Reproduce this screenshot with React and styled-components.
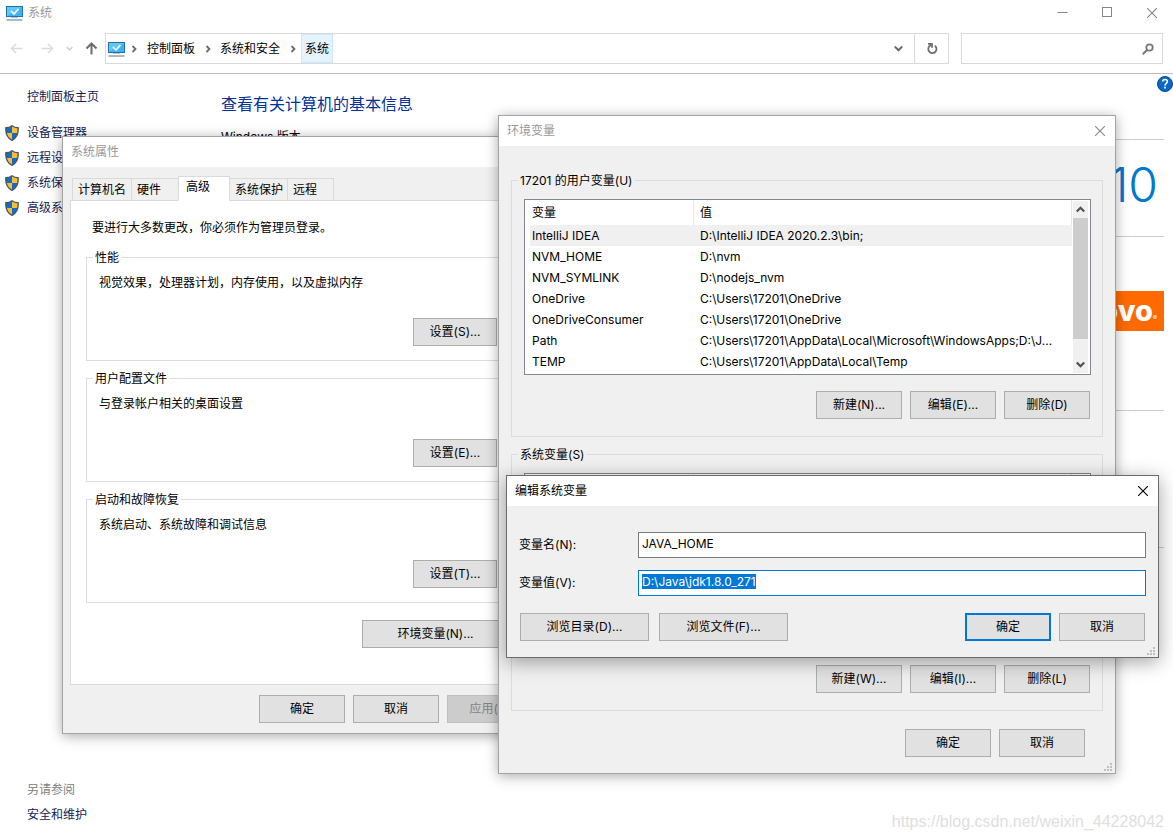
import React, { useEffect, useRef } from "react";
import styled, { createGlobalStyle, css } from "styled-components";

const Global = createGlobalStyle`
  *, *::before, *::after { box-sizing: border-box; }
  body { margin: 0; background: #fff; }
  body, button, input, table {
    font-family: Inter, "Noto Sans CJK SC", sans-serif;
    font-size: 12px;
    line-height: 18px;
    color: #000;
  }
  a { color: inherit; text-decoration: none; }
  svg { display: block; flex: none; }
`;

/* ---------- desktop and main window ---------- */

const Desktop = styled.div`
  position: relative;
  min-height: 100vh;
  overflow: hidden;
  display: flex;
  flex-direction: column;
`;

const WindowBar = styled.header`
  display: flex;
  align-items: center;
  height: 25px;
  padding: 0 16px 0 6px;
  gap: 5px;
  color: #999;
`;

const WindowControls = styled.div`
  display: flex;
  gap: 34px;
  margin-left: auto;
`;

const IconButton = styled.button`
  display: flex;
  align-items: center;
  justify-content: center;
  padding: 0;
  border: 0;
  background: none;
  color: ${(p) => p.$color || "#868686"};
`;

const NavRow = styled.nav`
  display: flex;
  align-items: center;
  padding: 8px 10px 9px;
  border-bottom: 1px solid #bfbfbf;
`;

const NavButtons = styled.div`
  display: flex;
  align-items: center;
  gap: ${(p) => p.$gap}px;
`;

const AddressBar = styled.div`
  flex: 1;
  display: flex;
  height: 31px;
  margin-left: 7px;
  border: 1px solid #d9d9d9;
`;

const Crumbs = styled.div`
  flex: 1;
  display: flex;
  align-items: center;
  padding: 0 11px 0 2px;
`;

const Crumb = styled.a`
  display: flex;
  align-items: center;
  height: 29px;
  padding: 0 3px;
  border: 1px solid ${(p) => (p.$current ? "#cce8ff" : "transparent")};
  background: ${(p) => (p.$current ? "#e5f3ff" : "none")};
`;

const CrumbArrow = styled.span`
  display: flex;
  justify-content: center;
  width: ${(p) => (p.$wide ? 18 : 17)}px;
`;

const DropButton = styled(IconButton)`
  margin-left: auto;
`;

const Refresh = styled(IconButton)`
  width: 34px;
  border-left: 1px solid #d9d9d9;
`;

const SearchBox = styled.label`
  display: flex;
  align-items: center;
  width: 202px;
  height: 31px;
  margin-left: 12px;
  padding-right: 8px;
  border: 1px solid #d9d9d9;
  color: #767676;
`;

const SearchInput = styled.input`
  flex: 1;
  min-width: 0;
  border: 0;
  outline: 0;
  padding: 0 6px;
`;

const Columns = styled.div`
  flex: 1;
  display: flex;
`;

const Sidebar = styled.aside`
  display: flex;
  flex-direction: column;
  width: 221px;
  padding: 14px 0 9px 5px;
  color: #151c55;
`;

const SideLink = styled.a`
  display: flex;
  align-items: center;
  gap: 8px;
  height: 18px;
  margin-bottom: 7px;
  padding-left: ${(p) => (p.$plain ? 22 : 0)}px;
`;

const SideTasks = styled.div`
  margin-top: 11px;
`;

const SeeAlso = styled.div`
  margin-top: auto;
`;

const SeeTitle = styled.div`
  margin-bottom: 7px;
  padding-left: 22px;
  color: #808080;
`;

const Main = styled.main`
  flex: 1;
  padding: 18px 9px 0 0;
`;

const Heading = styled.h1`
  margin: 0;
  font-size: 16px;
  line-height: 24px;
  font-weight: 400;
  color: #003399;
`;

const Section = styled.section`
  display: flex;
  align-items: flex-start;
  justify-content: flex-end;
  height: ${(p) => p.$height}px;
  border-top: 1px solid #ccc;
`;

const Edition = styled.h2`
  margin: 12px 0 0;
  font-size: 12px;
  font-weight: 400;
  line-height: 18px;
  height: 11px;
`;

const Brand = styled.div`
  padding: 10px 6px 0 0;
  font-family: Inter, sans-serif;
  font-size: 48px;
  font-weight: 300;
  line-height: 70px;
  color: #0078cf;
`;

const Maker = styled.div`
  display: flex;
  align-items: center;
  height: 40px;
  padding: 0 7px;
  margin-top: 54px;
  background: #ff6a00;
  color: #fff;
  font-family: Inter, sans-serif;
  font-size: 29px;
  font-weight: 800;
  line-height: 40px;
`;

const Mark = styled.small`
  align-self: flex-end;
  font-size: 6px;
  font-weight: 400;
  line-height: 26px;
`;

const HelpLink = styled.a`
  position: absolute;
  top: 76px;
  right: 0;
`;

const Watermark = styled.div`
  position: absolute;
  right: 9px;
  bottom: 8px;
  font-family: "Liberation Sans", sans-serif;
  font-size: 16px;
  line-height: 20px;
  color: #dedede;
`;

/* ---------- dialogs ---------- */

const Dialog = styled.section`
  position: absolute;
  left: ${(p) => p.$x}px;
  top: ${(p) => p.$y}px;
  width: ${(p) => p.$w}px;
  background: #f0f0f0;
  border: 1px solid ${(p) => (p.$active ? "#6b6b6b" : "#a4a4a4")};
  box-shadow: ${(p) =>
    p.$active ? "0 4px 18px rgba(0,0,0,.36)" : "0 2px 12px rgba(0,0,0,.34)"};
`;

const DialogBar = styled.header`
  display: flex;
  align-items: center;
  justify-content: space-between;
  height: 30px;
  padding: 0 10px 0 8px;
  background: #fff;
  color: ${(p) => (p.$active ? "#000" : "#999")};
`;

const Body = styled.div`
  padding: ${(p) => p.$pad};
`;

const Button = styled.button`
  height: 28px;
  width: ${(p) => p.$w || 86}px;
  padding: 0;
  border: 1px solid #adadad;
  border-radius: 0;
  background: #e1e1e1;
  white-space: nowrap;
  ${(p) => p.$primary && css`border: 2px solid #0078d7;`}
  &:disabled {
    background: #ccc;
    border-color: #bfbfbf;
    color: #838383;
  }
`;

const ButtonRow = styled.div`
  display: flex;
  justify-content: flex-end;
  gap: 8px;
  margin-top: ${(p) => p.$top}px;
  padding-right: ${(p) => p.$right || 0}px;
`;

const BrowseButtons = styled.div`
  display: flex;
  gap: 10px;
  margin-right: auto;
  padding-left: 1px;
`;

const Group = styled.fieldset`
  min-width: 0;
  margin: 0 0 9px;
  padding: 0 11px ${(p) => p.$bottom}px 12px;
  border: 1px solid #dcdcdc;
`;

const Legend = styled.legend`
  height: 17px;
  margin-left: -6px;
  padding: 0 2px;
  line-height: 17px;
`;

const GroupText = styled.p`
  margin: 8px 0 0;
`;

const Tabs = styled.div`
  position: relative;
  z-index: 1;
  display: flex;
  align-items: flex-end;
  margin: 0 0 -1px 2px;
`;

const Tab = styled.button`
  display: flex;
  align-items: ${(p) => (p.$on ? "flex-start" : "center")};
  height: ${(p) => (p.$on ? 25 : 23)}px;
  width: ${(p) => p.$w}px;
  margin-right: -1px;
  padding: ${(p) => (p.$on ? "1px 0 0 7px" : "0 0 0 5px")};
  border: 1px solid #dadada;
  border-bottom-color: ${(p) => (p.$on ? "#fff" : "#dadada")};
  background: ${(p) => (p.$on ? "#fff" : "#f0f0f0")};
  white-space: nowrap;
`;

const TabPanel = styled.div`
  padding: 18px 23px 36px 15px;
  border: 1px solid #dadada;
  background: #fff;
`;

const Notice = styled.p`
  margin: 0 0 12px;
  padding-left: 6px;
`;

const ListBox = styled.div`
  display: flex;
  justify-content: space-between;
  height: 176px;
  margin-top: 10px;
  padding: 0 2px 0 5px;
  border: 1px solid #828790;
  background: #fff;
`;

const VarTable = styled.table`
  flex: 1;
  height: max-content;
  margin-right: 1px;
  table-layout: fixed;
  border-collapse: separate;
  border-spacing: 0;
`;

const HeadCell = styled.th`
  height: 25px;
  width: ${(p) => p.$w || "auto"};
  padding: 0 0 0 ${(p) => (p.$w ? 2 : 6)}px;
  border-right: 1px solid #e5e5e5;
  text-align: left;
  font-weight: 400;
`;

const VarRow = styled.tr`
  background: ${(p) => (p.$on ? "#f0f0f0" : "none")};
`;

const Cell = styled.td`
  height: 21px;
  padding: 0 0 0 ${(p) => (p.$value ? 6 : 2)}px;
  white-space: nowrap;
  overflow: hidden;
`;

const Scrollbar = styled.div`
  display: flex;
  flex-direction: column;
  width: 15px;
  margin: 1px 0;
  background: #f0f0f0;
`;

const ScrollButton = styled(IconButton)`
  height: 17px;
`;

const Thumb = styled.div`
  height: 121px;
  margin-bottom: auto;
  background: #cdcdcd;
`;

const Field = styled.label`
  display: flex;
  align-items: center;
  margin-bottom: ${(p) => (p.$last ? 0 : 12)}px;
`;

const FieldName = styled.span`
  width: 119px;
`;

const TextBox = styled.input`
  flex: 1;
  min-width: 0;
  height: 26px;
  padding: 0 3px 3px;
  border: 1px solid #7a7a7a;
  border-radius: 0;
  outline: 0;
  background: #fff;
  &:focus { border-color: #0078d7; }
  &::selection { background: #0078d7; color: #fff; }
`;

const Grip = styled.span`
  position: absolute;
  right: 2px;
  bottom: 1px;
`;

/* ---------- icons ---------- */

const Monitor = () => (
  <svg width="17" height="16" viewBox="0 0 17 16" aria-hidden="true">
    <rect x="0.5" y="1.5" width="16" height="10" fill="#3db4f7" stroke="#2272a8" />
    <path d="M1 11V2h15z" fill="#62c6fb" />
    <path d="M5 6l3 3 4.500-5" fill="none" stroke="#fff" strokeWidth="1.700" />
    <path d="M5 12.500h7" stroke="#b7c3cd" strokeWidth="1" />
    <path d="M0.500 15h16" stroke="#7e93a6" strokeWidth="1.300" />
  </svg>
);

const Shield = () => {
  const d = "M7 0.800C5.500 2 3 2.800 0.900 2.800C0.500 8 2.200 13 7 15.300C11.800 13 13.500 8 13.100 2.800C11 2.800 8.500 2 7 0.800z";
  return (
    <svg width="14" height="16" viewBox="0 0 14 16" aria-hidden="true">
      <clipPath id="shield"><path d={d} /></clipPath>
      <g clipPath="url(#shield)">
        <path d="M0 0h7v8H0zM7 8h7v8H7z" fill="#0f6cc9" />
        <path d="M7 0h7v8H7zM0 8h7v8H0z" fill="#fcbc35" />
      </g>
      <path d={d} fill="none" stroke="#4c5660" strokeWidth="1.400" />
    </svg>
  );
};

const Chevron = ({ dir, w = 8, color = "#6d6d6d", weight = 1.8 }) => {
  const d = { right: "M2.500 1L5.500 4L2.500 7", down: "M0.700 2.300L4 5.600L7.300 2.300", up: "M0.700 5.700L4 2.400L7.300 5.700" }[dir];
  return (
    <svg width={w} height={w} viewBox="0 0 8 8" aria-hidden="true">
      <path d={d} fill="none" stroke={color} strokeWidth={weight} />
    </svg>
  );
};

const Arrow = ({ dir, color }) => (
  <svg width="13" height="13" viewBox="0 0 13 13" aria-hidden="true">
    <path
      d={{ left: "M12.500 6.500H1.500M6 2L1.500 6.500L6 11", right: "M0.500 6.500H11.500M7 2L11.500 6.500L7 11", up: "M6.500 12.500V1.500M1.500 6.500L6.500 1.500L11.500 6.500" }[dir]}
      fill="none" stroke={color} strokeWidth={dir === "up" ? 2 : 1.6}
    />
  </svg>
);

const Cross = () => (
  <svg width="10" height="10" viewBox="0 0 10 10" aria-hidden="true">
    <path d="M0 0l10 10M10 0l-10 10" stroke="currentColor" strokeWidth="1.100" />
  </svg>
);

const RefreshIcon = () => (
  <svg width="12" height="13" viewBox="0 0 12 13" aria-hidden="true">
    <path d="M8.800 3.700A4.100 4.100 0 1 1 3.400 4.200L5.600 2.400" fill="none" stroke="#6d6d6d" strokeWidth="1.800" />
    <path d="M2 1.800H6V5.800" fill="none" stroke="#6d6d6d" strokeWidth="1.700" />
  </svg>
);

const SearchIcon = () => (
  <svg width="12" height="12" viewBox="0 0 12 12" aria-hidden="true">
    <circle cx="7.500" cy="4.500" r="3.200" fill="none" stroke="currentColor" strokeWidth="1.800" />
    <path d="M5.200 6.800L0.800 11.200" stroke="currentColor" strokeWidth="2" />
  </svg>
);

const HelpIcon = () => (
  <svg width="16" height="16" viewBox="0 0 16 16" aria-hidden="true">
    <circle cx="8" cy="8" r="7.500" fill="#0a66c8" stroke="#0b4a86" />
    <path d="M5.700 5.600C5.700 2.800 10.400 2.800 10.400 5.500C10.400 7.200 8 7.500 8 9.500" fill="none" stroke="#fff" strokeWidth="1.600" />
    <rect x="7.100" y="10.700" width="1.800" height="1.800" fill="#fff" />
  </svg>
);

const GripIcon = () => (
  <svg width="9" height="9" viewBox="0 0 9 9" aria-hidden="true">
    <path d="M6 0h2v2H6zM3 3h2v2H3zM6 3h2v2H6zM0 6h2v2H0zM3 6h2v2H3zM6 6h2v2H6z" fill="#bfbfbf" />
  </svg>
);

/* ---------- composed parts ---------- */

const tasks = ["设备管理器", "远程设置", "系统保护", "高级系统设置"];

const settingGroups = [
  ["性能", "视觉效果，处理器计划，内存使用，以及虚拟内存", "设置(S)..."],
  ["用户配置文件", "与登录帐户相关的桌面设置", "设置(E)..."],
  ["启动和故障恢复", "系统启动、系统故障和调试信息", "设置(T)..."],
];

const tabs = [["计算机名", 60], ["硬件", 48], ["高级", 52], ["系统保护", 59], ["远程", 47]];

const userVars = [
  ["IntelliJ IDEA", "D:\\IntelliJ IDEA 2020.2.3\\bin;"],
  ["NVM_HOME", "D:\\nvm"],
  ["NVM_SYMLINK", "D:\\nodejs_nvm"],
  ["OneDrive", "C:\\Users\\17201\\OneDrive"],
  ["OneDriveConsumer", "C:\\Users\\17201\\OneDrive"],
  ["Path", "C:\\Users\\17201\\AppData\\Local\\Microsoft\\WindowsApps;D:\\J..."],
  ["TEMP", "C:\\Users\\17201\\AppData\\Local\\Temp"],
];

const VariableGroup = ({ title, headings = [], rows, actions }) => (
  <Group $bottom={17}>
    <Legend>{title}</Legend>
    <ListBox>
      <VarTable>
        <thead>
          <tr>
            <HeadCell $w="164px">{headings[0]}</HeadCell>
            <HeadCell>{headings[1]}</HeadCell>
          </tr>
        </thead>
        <tbody>
          {rows.map(([name, value], i) => (
            <VarRow key={name} $on={i === 0}>
              <Cell>{name}</Cell>
              <Cell $value>{value}</Cell>
            </VarRow>
          ))}
        </tbody>
      </VarTable>
      <Scrollbar>
        <ScrollButton aria-label="向上滚动"><Chevron dir="up" w={9} color="#505050" weight={1.9} /></ScrollButton>
        <Thumb />
        <ScrollButton aria-label="向下滚动"><Chevron dir="down" w={9} color="#505050" weight={1.9} /></ScrollButton>
      </Scrollbar>
    </ListBox>
    <ButtonRow $top={16} $right={1}>
      {actions.map((a) => <Button key={a}>{a}</Button>)}
    </ButtonRow>
  </Group>
);

const SystemProperties = () => (
  <Dialog $x={62} $y={136} $w={480} aria-label="系统属性">
    <DialogBar>系统属性</DialogBar>
    <Body $pad="9px 8px 10px 7px">
      <Tabs role="tablist">
        {tabs.map(([name, w]) => (
          <Tab key={name} role="tab" $w={w} $on={name === "高级"}>{name}</Tab>
        ))}
      </Tabs>
      <TabPanel>
        <Notice>要进行大多数更改，你必须作为管理员登录。</Notice>
        {settingGroups.map(([title, text, action]) => (
          <Group key={title} $bottom={14}>
            <Legend>{title}</Legend>
            <GroupText>{text}</GroupText>
            <ButtonRow $top={26}><Button $w={84}>{action}</Button></ButtonRow>
          </Group>
        ))}
        <ButtonRow $top={17}><Button $w={147}>环境变量(N)...</Button></ButtonRow>
      </TabPanel>
      <ButtonRow $top={10}>
        <Button>确定</Button>
        <Button>取消</Button>
        <Button disabled>应用(A)</Button>
      </ButtonRow>
    </Body>
  </Dialog>
);

const EnvironmentVariables = () => (
  <Dialog $x={498} $y={115} $w={618} aria-label="环境变量">
    <DialogBar>
      环境变量
      <IconButton aria-label="关闭"><Cross /></IconButton>
    </DialogBar>
    <Body $pad="26px 12px 16px">
      <VariableGroup title="17201 的用户变量(U)" headings={["变量", "值"]} rows={userVars} actions={["新建(N)...", "编辑(E)...", "删除(D)"]} />
      <VariableGroup title="系统变量(S)" rows={[]} actions={["新建(W)...", "编辑(I)...", "删除(L)"]} />
      <ButtonRow $top={18} $right={18}>
        <Button>确定</Button>
        <Button>取消</Button>
      </ButtonRow>
    </Body>
    <Grip><GripIcon /></Grip>
  </Dialog>
);

const EditVariable = () => {
  const valueBox = useRef(null);
  useEffect(() => {
    valueBox.current.focus();
    valueBox.current.select();
  }, []);
  return (
    <Dialog $x={506} $y={475} $w={653} $active aria-label="编辑系统变量">
      <DialogBar $active>
        编辑系统变量
        <IconButton $color="#000" aria-label="关闭"><Cross /></IconButton>
      </DialogBar>
      <Body $pad="26px 12px 16px">
        <Field>
          <FieldName>变量名(N):</FieldName>
          <TextBox defaultValue="JAVA_HOME" />
        </Field>
        <Field $last>
          <FieldName>变量值(V):</FieldName>
          <TextBox ref={valueBox} defaultValue="D:\Java\jdk1.8.0_271" />
        </Field>
        <ButtonRow $top={17} $right={1}>
          <BrowseButtons>
            <Button $w={129}>浏览目录(D)...</Button>
            <Button $w={129}>浏览文件(F)...</Button>
          </BrowseButtons>
          <Button $primary>确定</Button>
          <Button>取消</Button>
        </ButtonRow>
      </Body>
      <Grip><GripIcon /></Grip>
    </Dialog>
  );
};

export default function App() {
  return (
    <Desktop>
      <Global />
      <WindowBar>
        <Monitor />
        <span>系统</span>
        <WindowControls>
          <IconButton aria-label="最小化">
            <svg width="11" height="11" viewBox="0 0 11 11"><path d="M0.500 5.500h10" stroke="currentColor" /></svg>
          </IconButton>
          <IconButton aria-label="最大化">
            <svg width="11" height="11" viewBox="0 0 11 11"><rect x="0.500" y="0.500" width="9" height="9" fill="none" stroke="currentColor" /></svg>
          </IconButton>
          <IconButton aria-label="关闭"><Cross /></IconButton>
        </WindowControls>
      </WindowBar>
      <NavRow>
        <NavButtons $gap={12}>
          <NavButtons $gap={18}>
            <IconButton aria-label="后退"><Arrow dir="left" color="#dcdcdc" /></IconButton>
            <IconButton aria-label="前进"><Arrow dir="right" color="#dcdcdc" /></IconButton>
          </NavButtons>
          <IconButton aria-label="最近"><Chevron dir="down" w={7} color="#d0d0d0" /></IconButton>
          <IconButton aria-label="上移"><Arrow dir="up" color="#6d6d6d" /></IconButton>
        </NavButtons>
        <AddressBar>
          <Crumbs>
            <Monitor />
            <CrumbArrow $wide><Chevron dir="right" /></CrumbArrow>
            <Crumb href="#panel">控制面板</Crumb>
            <CrumbArrow><Chevron dir="right" /></CrumbArrow>
            <Crumb href="#security">系统和安全</Crumb>
            <CrumbArrow><Chevron dir="right" /></CrumbArrow>
            <Crumb href="#system" $current>系统</Crumb>
            <DropButton aria-label="展开"><Chevron dir="down" w={9} /></DropButton>
          </Crumbs>
          <Refresh aria-label="刷新"><RefreshIcon /></Refresh>
        </AddressBar>
        <SearchBox>
          <SearchInput type="search" aria-label="搜索" />
          <SearchIcon />
        </SearchBox>
      </NavRow>
      <Columns>
        <Sidebar>
          <SideLink $plain href="#home">控制面板主页</SideLink>
          <SideTasks>
            {tasks.map((t) => (
              <SideLink key={t} href="#task"><Shield />{t}</SideLink>
            ))}
          </SideTasks>
          <SeeAlso>
            <SeeTitle>另请参阅</SeeTitle>
            <SideLink $plain href="#maintenance">安全和维护</SideLink>
          </SeeAlso>
        </Sidebar>
        <Main>
          <Heading>查看有关计算机的基本信息</Heading>
          <Edition>Windows 版本</Edition>
          <Section $height={97}><Brand>Windows 10</Brand></Section>
          <Section $height={174}><Maker>Lenovo<Mark>®</Mark></Maker></Section>
          <Section $height={137} />
          <Section $height={60} />
        </Main>
      </Columns>
      <HelpLink href="#help" aria-label="帮助"><HelpIcon /></HelpLink>
      <SystemProperties />
      <EnvironmentVariables />
      <EditVariable />
      <Watermark>https://blog.csdn.net/weixin_44228042</Watermark>
    </Desktop>
  );
}
